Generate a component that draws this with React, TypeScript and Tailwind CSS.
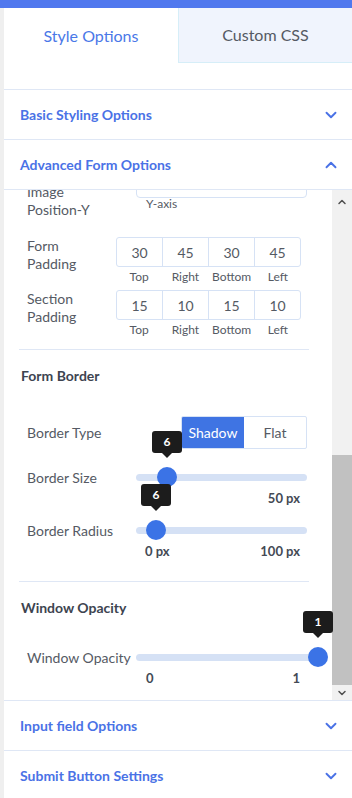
import { ChevronDown, ChevronUp } from 'lucide-react';

const font = { fontFamily: 'Lato, "Open Sans", sans-serif' };

function AccordionHeader({ title, open }: { title: string; open?: boolean }) {
    return (
        <div className="h-[50px] flex items-center justify-between pl-[16px] pr-[12px] border-b border-[#dfe7f5]">
            <span className="text-[14px] font-bold text-[#4a72e6]">{title}</span>
            {open ? (
                <ChevronUp size={18} strokeWidth={2.5} className="text-[#4a72e6]" />
            ) : (
                <ChevronDown size={18} strokeWidth={2.5} className="text-[#4a72e6]" />
            )}
        </div>
    );
}

function BoxRow({ values }: { values: string[] }) {
    const labels = ['Top', 'Right', 'Bottom', 'Left'];
    return (
        <div className="w-[185px] flex flex-col">
            <div className="h-[30px] flex border border-[#d6e2f5] rounded-[3px]">
                {values.map((v, i) => (
                    <div
                        key={i}
                        className={`flex-1 flex items-center justify-center text-[14px] text-[#555a64] ${i > 0 ? 'border-l border-[#d6e2f5]' : ''}`}
                    >
                        {v}
                    </div>
                ))}
            </div>
            <div className="flex mt-[2px]">
                {labels.map((l) => (
                    <div key={l} className="flex-1 text-center text-[12px] leading-[16px] text-[#555a64]">
                        {l}
                    </div>
                ))}
            </div>
        </div>
    );
}

function Slider({ label, width, thumb, tip }: { label: string; width: number; thumb: number; tip: string }) {
    return (
        <div className="flex items-center h-[20px]">
            <span className="w-[132px] pl-[23px] text-[14px] text-[#555a64]">{label}</span>
            <div className="relative h-[20px] flex items-center" style={{ width }}>
                <div className="w-full h-[7px] rounded-full bg-[#d5e1f5]" />
                <div
                    className="absolute top-0 w-[20px] h-[20px] rounded-full bg-[#3b73e6]"
                    style={{ left: thumb - 10 }}
                />
                <div
                    className="absolute bottom-[29px] flex flex-col items-center"
                    style={{ left: thumb - 15 }}
                >
                    <div className="w-[30px] h-[22px] rounded-[3px] bg-[#1c1c1c] flex items-center justify-center text-white text-[12px] font-bold">
                        {tip}
                    </div>
                    <div className="w-0 h-0 border-l-[5px] border-r-[5px] border-t-[5px] border-l-transparent border-r-transparent border-t-[#1c1c1c]" />
                </div>
            </div>
        </div>
    );
}

export default function App() {
    return (
        <div className="w-[352px] h-[798px] bg-[#efefef] flex flex-col overflow-hidden" style={font}>
            <div className="h-[8px] bg-[#5078ee] shrink-0" />
            <div className="flex-1 flex">
                <div className="w-[4px] bg-[#efefef]" />
                <div className="flex-1 bg-white flex flex-col">
                    {/* tabs */}
                    <div className="h-[55px] flex">
                        <div className="w-[174px] flex items-center justify-center text-[16px] text-[#4a78e8]">
                            Style Options
                        </div>
                        <div className="flex-1 flex items-center justify-center text-[16px] text-[#555a64] bg-[#f0f4fd] border-l border-b border-[#d6eef8]">
                            Custom CSS
                        </div>
                    </div>
                    <div className="h-[27px] border-b border-[#dfe7f5]" />
                    <AccordionHeader title="Basic Styling Options" />
                    <AccordionHeader title="Advanced Form Options" open />

                    {/* scroll area */}
                    <div className="h-[510px] flex overflow-hidden">
                        <div className="w-[328px] flex flex-col text-[#555a64]">
                            {/* Image Position-Y (cut) */}
                            <div className="flex items-start -mt-[30px] h-[58px]">
                                <div className="w-[132px] pl-[23px] mt-[23px] text-[14px] leading-[18px]">
                                    Image
                                    <br />
                                    Position-Y
                                </div>
                                <div className="w-[171px] flex flex-col">
                                    <div className="mt-[4px] h-[34px] border border-[#d6e2f5] rounded-[4px]" />
                                    <span className="ml-[10px] -mt-[2px] text-[12px] leading-[16px]">Y-axis</span>
                                </div>
                            </div>

                            <div className="flex items-start mt-[19px]">
                                <div className="w-[112px] pl-[23px] text-[14px] leading-[18px]">
                                    Form
                                    <br />
                                    Padding
                                </div>
                                <BoxRow values={['30', '45', '30', '45']} />
                            </div>

                            <div className="flex items-start mt-[5px]">
                                <div className="w-[112px] pl-[23px] text-[14px] leading-[18px]">
                                    Section
                                    <br />
                                    Padding
                                </div>
                                <BoxRow values={['15', '10', '15', '10']} />
                            </div>

                            <div className="ml-[15px] w-[290px] mt-[11px] border-t border-[#dfe7f5]" />

                            <div className="mt-[16px] pl-[17px] text-[14px] leading-[20px] font-bold text-[#3d4450]">
                                Form Border
                            </div>

                            <div className="flex items-center mt-[30px]">
                                <span className="w-[177px] pl-[23px] text-[14px]">Border Type</span>
                                <div className="w-[126px] h-[33px] flex border border-[#d6e2f5] rounded-[2px] overflow-hidden">
                                    <div className="flex-1 bg-[#3f74e3] text-white text-[14px] flex items-center justify-center">
                                        Shadow
                                    </div>
                                    <div className="flex-1 text-[14px] flex items-center justify-center">Flat</div>
                                </div>
                            </div>

                            <div className="mt-[18px]">
                                <Slider label="Border Size" width={171} thumb={31} tip="6" />
                            </div>
                            <div className="ml-[132px] w-[171px] mt-[3px] flex justify-end pr-[7px] text-[13px] leading-[16px] font-bold text-[#444a55]">
                                50 px
                            </div>

                            <div className="mt-[14px]">
                                <Slider label="Border Radius" width={171} thumb={20} tip="6" />
                            </div>
                            <div className="ml-[132px] w-[171px] mt-[3px] flex justify-between pl-[9px] pr-[7px] text-[13px] leading-[16px] font-bold text-[#444a55]">
                                <span>0 px</span>
                                <span>100 px</span>
                            </div>

                            <div className="ml-[15px] w-[290px] mt-[22px] border-t border-[#dfe7f5]" />

                            <div className="mt-[16px] pl-[17px] text-[14px] leading-[20px] font-bold text-[#3d4450]">
                                Window Opacity
                            </div>

                            <div className="mt-[29px]">
                                <Slider label="Window Opacity" width={182} thumb={182} tip="1" />
                            </div>
                            <div className="ml-[132px] w-[182px] mt-[3px] flex justify-between pl-[10px] pr-[18px] text-[13px] leading-[16px] font-bold text-[#444a55]">
                                <span>0</span>
                                <span>1</span>
                            </div>
                        </div>

                        {/* scrollbar */}
                        <div className="w-[20px] bg-[#f1f1f1] flex flex-col items-center">
                            <div className="h-[24px] flex items-center justify-center">
                                <ChevronUp size={12} strokeWidth={3} className="text-[#505050]" />
                            </div>
                            <div className="h-[241px]" />
                            <div className="w-full h-[230px] bg-[#c1c1c1]" />
                            <div className="flex-1 flex items-center justify-center">
                                <ChevronDown size={12} strokeWidth={3} className="text-[#505050]" />
                            </div>
                        </div>
                    </div>

                    <div className="border-t border-[#dfe7f5]" />
                    <AccordionHeader title="Input field Options" />
                    <AccordionHeader title="Submit Button Settings" />
                </div>
            </div>
        </div>
    );
}
